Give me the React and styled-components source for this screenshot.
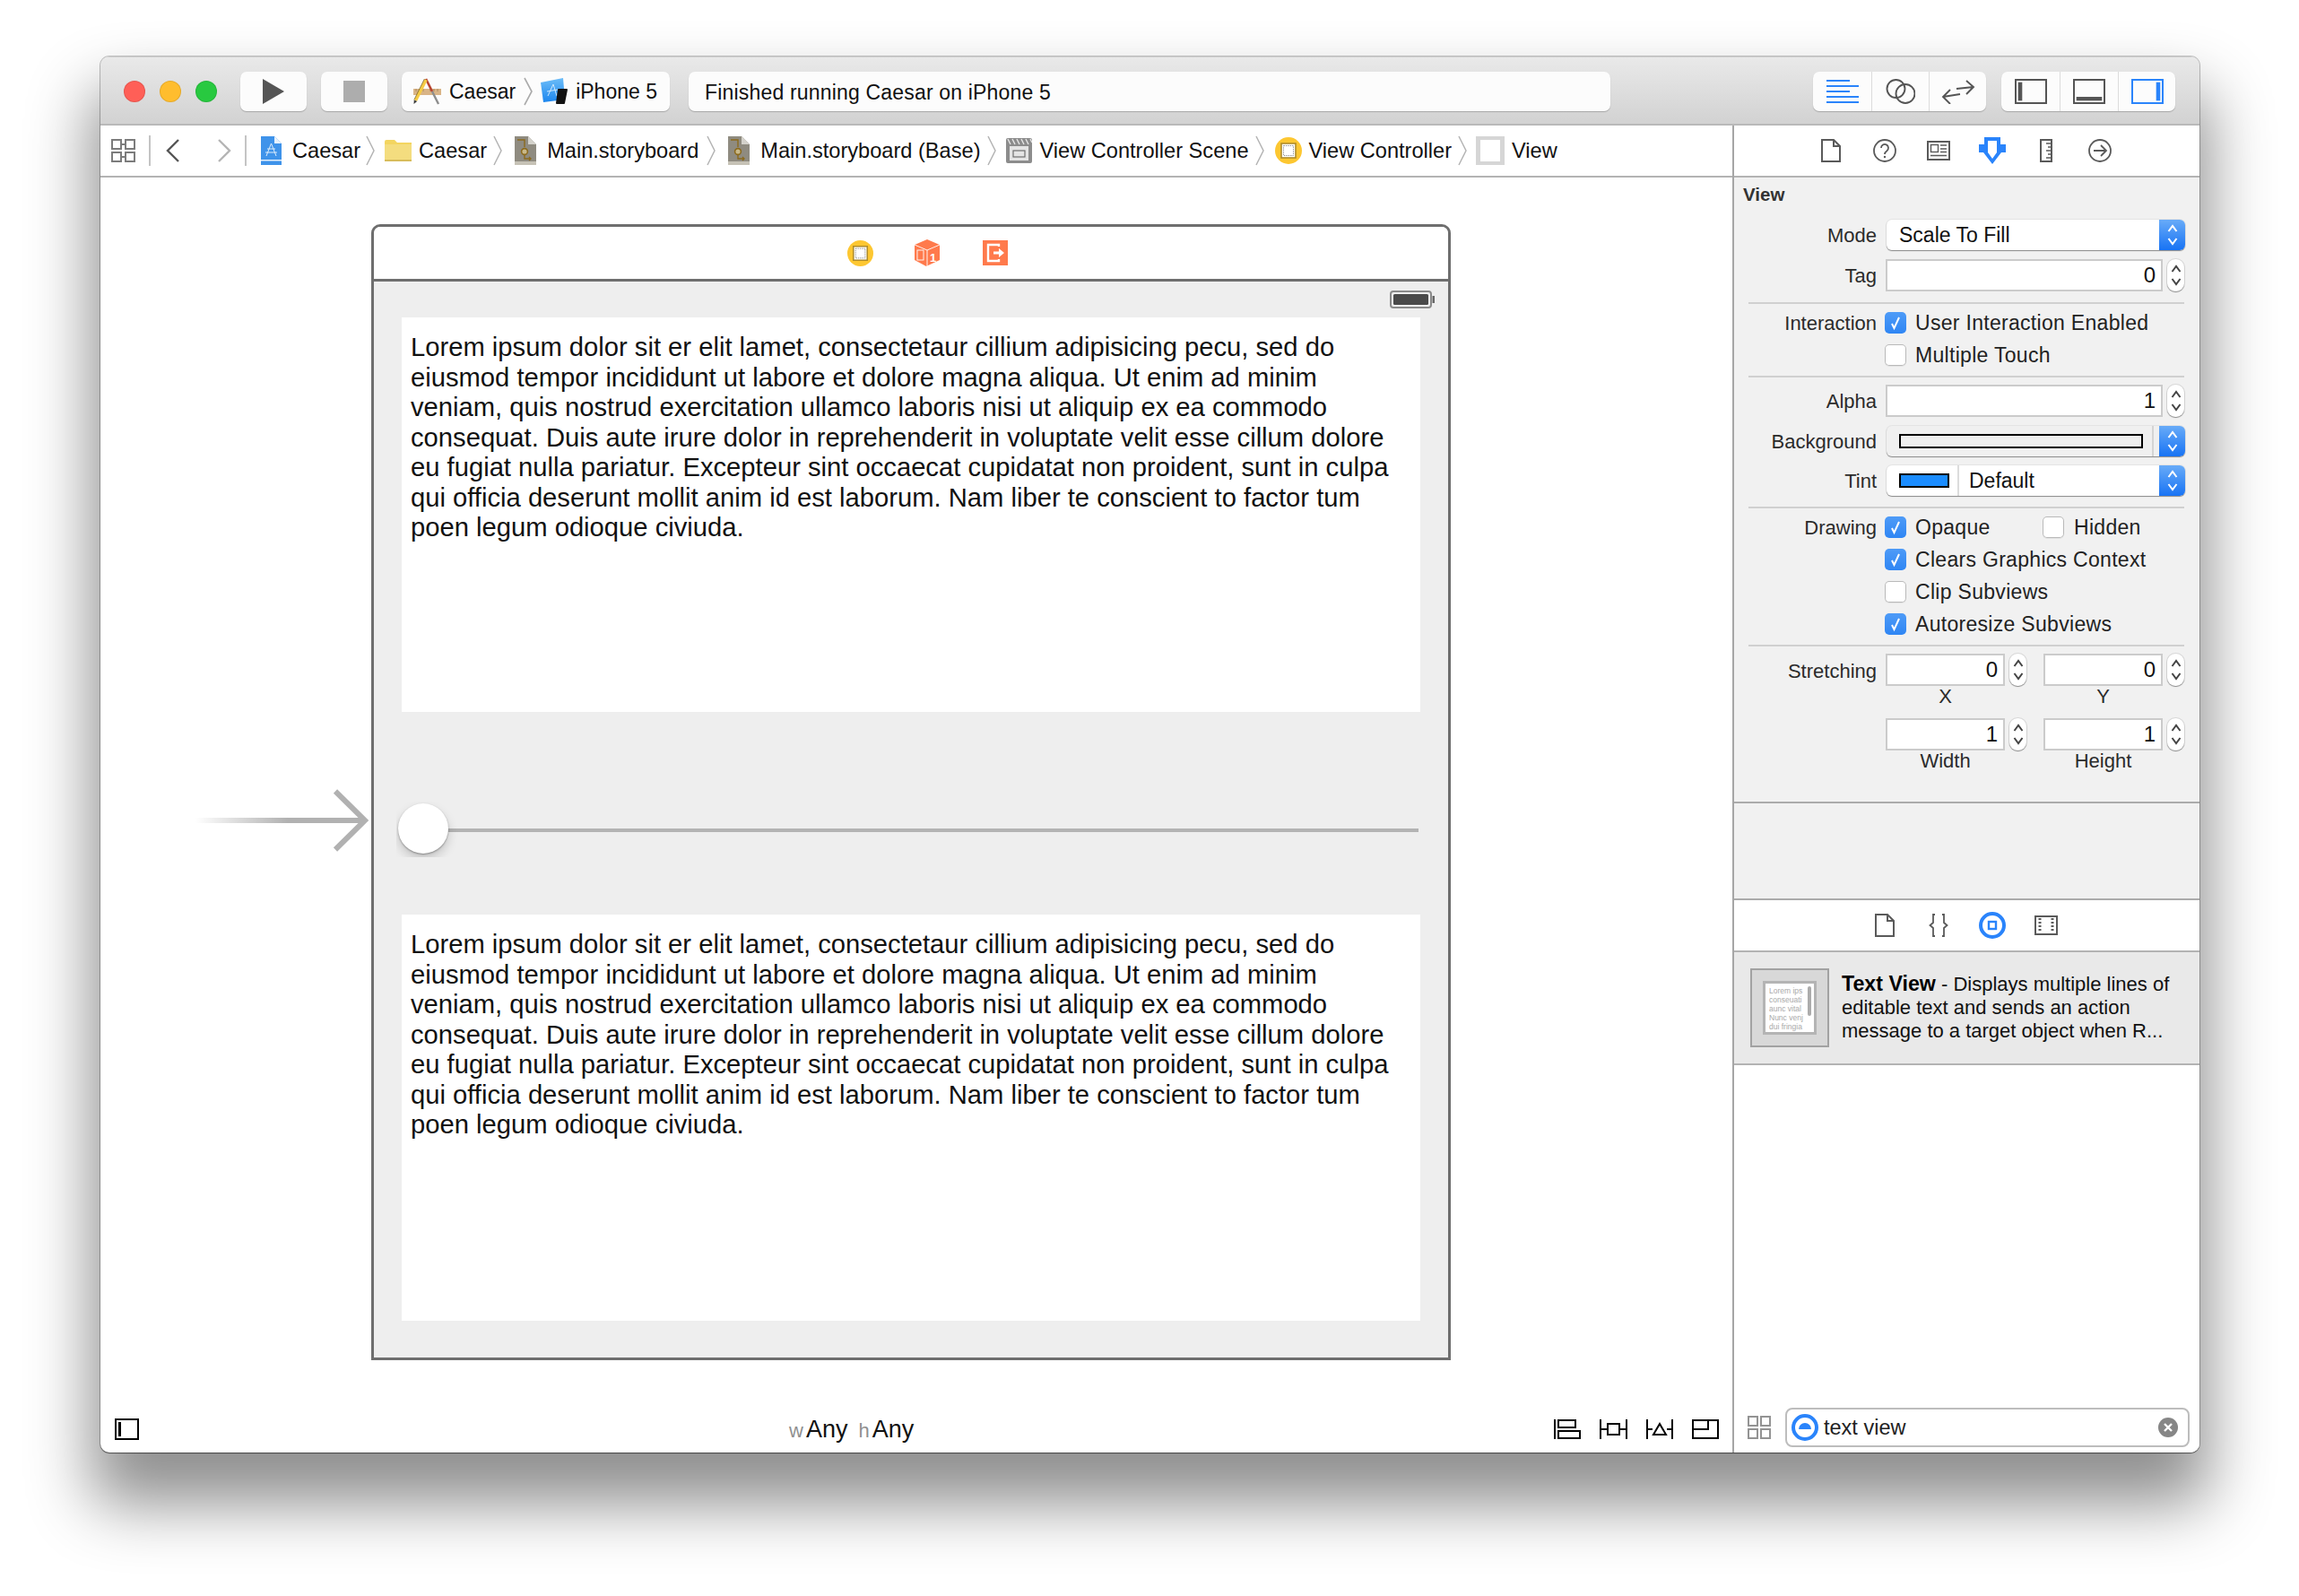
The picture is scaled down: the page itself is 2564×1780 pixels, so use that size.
import React from 'react';
import styled, { createGlobalStyle } from 'styled-components';

const GlobalStyle = createGlobalStyle`
  html, body {
    margin: 0;
    background: #fff;
    font-family: "Liberation Sans", Arial, sans-serif;
    color: #111;
  }
  * { box-sizing: border-box; }
`;

const Page = styled.div`
  width: 2564px;
  height: 1780px;
  padding: 63px 0 0 112px;
  overflow: hidden;
`;

const Window = styled.div`
  width: 2341px;
  height: 1557px;
  display: flex;
  flex-direction: column;
  background: #fff;
  border-radius: 10px;
  overflow: hidden;
  box-shadow: 0 48px 70px 10px rgba(0, 0, 0, 0.44), 0 0 0 1px rgba(0, 0, 0, 0.22), 0 1px 1px rgba(0, 0, 0, 0.4);
`;

const Icon = styled.svg`
  display: block;
  flex-shrink: 0;
`;

/* toolbar */
const Toolbar = styled.div`
  height: 77px;
  flex-shrink: 0;
  display: flex;
  align-items: center;
  padding: 2px 27px 0 26px;
  background: linear-gradient(#e9e9e9, #d2d2d2);
  border-top: 1px solid #cfcfcf;
  border-bottom: 2px solid #b9b9b9;
`;

const Lights = styled.div`
  display: flex;
  gap: 16px;
  margin-right: 26px;
`;

const Light = styled.span`
  width: 24px;
  height: 24px;
  border-radius: 50%;
  background: ${(p) => p.$color};
  box-shadow: inset 0 0 0 1px rgba(0, 0, 0, 0.1);
`;

const ToolButton = styled.div`
  width: ${(p) => p.$w}px;
  height: 44px;
  margin-right: ${(p) => p.$mr || 16}px;
  display: flex;
  align-items: center;
  justify-content: ${(p) => (p.$center ? 'center' : 'flex-start')};
  padding: ${(p) => (p.$center ? '0' : p.$pad || '0 11px')};
  background: #fcfcfc;
  border-radius: 7px;
  box-shadow: 0 1px 1px rgba(0, 0, 0, 0.22);
  font-size: 23px;
  white-space: nowrap;
  flex-shrink: 0;
`;

const StatusText = styled.span`
  letter-spacing: 0.18px;
  padding-top: 2px;
`;

const Segments = styled.div`
  display: flex;
  margin-left: ${(p) => p.$ml || 0}px;
  height: 44px;
  background: #fcfcfc;
  border-radius: 7px;
  box-shadow: 0 1px 1px rgba(0, 0, 0, 0.22);
  overflow: hidden;
`;

const Segment = styled.div`
  width: ${(p) => p.$w || 64}px;
  display: flex;
  align-items: center;
  justify-content: center;
  & + & { border-left: 1px solid #dcdcdc; }
`;

/* main area */
const Main = styled.div`
  flex: 1;
  display: flex;
  min-height: 0;
`;

const Editor = styled.div`
  flex: 1;
  display: flex;
  flex-direction: column;
  min-width: 0;
`;

const Breadcrumbs = styled.div`
  height: 58px;
  flex-shrink: 0;
  display: flex;
  align-items: center;
  padding-left: 12px;
  border-bottom: 2px solid #b3b3b3;
  font-size: 23.6px;
  white-space: nowrap;
`;

const NavDivider = styled.span`
  width: 2px;
  height: 34px;
  background: #c4c4c4;
  margin: 0 ${(p) => p.$mr}px 0 ${(p) => p.$ml}px;
`;

const NavForward = styled.span`
  margin-left: 41px;
`;

const Crumb = styled.div`
  display: flex;
  align-items: center;
  gap: ${(p) => p.$gap || 12}px;
  margin-left: ${(p) => p.$ml || 0}px;
  margin-right: ${(p) => p.$mr || 0}px;
`;

const Canvas = styled.div`
  flex: 1;
  min-height: 0;
  padding: 52px 0 0 302px;
`;

const Device = styled.div`
  position: relative;
  width: 1204px;
  height: 1267px;
  border: 3px solid #6e6e6e;
  border-radius: 10px 10px 0 0;
  display: flex;
  flex-direction: column;
  background: #eee;
`;

const EntryArrow = styled(Icon)`
  position: absolute;
  left: -203px;
  top: 626px;
`;

const DeviceBar = styled.div`
  height: 61px;
  flex-shrink: 0;
  display: flex;
  align-items: center;
  justify-content: center;
  gap: 46px;
  padding-left: 36px;
  background: #fff;
  border-bottom: 3px solid #6e6e6e;
  border-radius: 7px 7px 0 0;
`;

const ExitWrap = styled.span`
  margin-left: 2px;
`;

const StatusStrip = styled.div`
  height: 40px;
  flex-shrink: 0;
  display: flex;
  justify-content: flex-end;
  padding: 10px 15px 0 0;
`;

const TextArea = styled.div`
  height: ${(p) => p.$h}px;
  margin: 0 31px;
  flex-shrink: 0;
  padding: 17px 10px 0;
  background: #fff;
  font-size: 29.2px;
  line-height: 33.5px;
  white-space: nowrap;
`;

const SliderArea = styled.div`
  height: 226px;
  flex-shrink: 0;
  display: flex;
  padding: 102px 33px 0 27px;
`;

const SliderThumb = styled.div`
  width: 56px;
  height: 56px;
  flex-shrink: 0;
  border-radius: 50%;
  background: #fff;
  box-shadow: 0 6px 12px rgba(0, 0, 0, 0.18), 0 1px 2px rgba(0, 0, 0, 0.35);
  clip-path: inset(-2px -28px -4px -2px);
`;

const SliderTrack = styled.div`
  flex: 1;
  height: 4px;
  margin-top: 28px;
  background: #b3b3b3;
`;

const BottomBar = styled.div`
  height: 50px;
  flex-shrink: 0;
  display: flex;
  align-items: center;
  padding: 0 15px 2px 16px;
`;

const SizeClass = styled.div`
  margin-left: 725px;
  display: flex;
  align-items: baseline;
  font-size: 27px;
`;

const SizePrefix = styled.span`
  font-size: 22px;
  color: #8f8f8f;
  margin: 0 3px 0 ${(p) => p.$ml || 0}px;
`;

const LayoutIcons = styled.div`
  margin-left: auto;
  display: flex;
  gap: 21px;
`;

/* inspector */
const Inspector = styled.div`
  width: 521px;
  flex-shrink: 0;
  display: flex;
  flex-direction: column;
  border-left: 2px solid #a6a6a6;
`;

const TabBar = styled.div`
  height: 58px;
  flex-shrink: 0;
  display: flex;
  align-items: center;
  justify-content: center;
  padding-right: 3px;
  background: #fff;
  border-bottom: 2px solid #b3b3b3;
`;

const Tab = styled.div`
  width: 60px;
  display: flex;
  justify-content: center;
`;

const Attributes = styled.div`
  height: 806px;
  flex-shrink: 0;
  background: #f1f1f1;
  border-bottom: 2px solid #ababab;
  font-size: 22px;
  color: #2b2b2b;
`;

const AttributesBody = styled.div`
  height: 698px;
  border-bottom: 2px solid #ababab;
`;

const SectionTitle = styled.div`
  height: 47px;
  padding: 7px 0 0 10px;
  font-size: 20.5px;
  font-weight: bold;
  line-height: 24px;
  color: #333;
`;

const Section = styled.div`
  display: flex;
  flex-direction: column;
  gap: ${(p) => p.$gap || 10}px;
  padding-top: ${(p) => p.$top || 0}px;
  padding-bottom: ${(p) => p.$bottom || 0}px;
`;

const Rule = styled.div`
  width: 486px;
  height: 2px;
  margin-left: 16px;
  background: #d0d0d0;
`;

const Row = styled.div`
  display: flex;
  align-items: ${(p) => (p.$top ? 'flex-start' : 'center')};
  gap: 10px;
  height: ${(p) => (p.$auto ? 'auto' : `${p.$h || 24}px`)};
`;

const Label = styled.div`
  width: 159px;
  flex-shrink: 0;
  padding-top: 2px;
  text-align: right;
  line-height: ${(p) => p.$lh || 24}px;
`;

const Select = styled.div`
  width: 333px;
  height: 34px;
  margin-left: 1px;
  display: flex;
  background: ${(p) => p.$bg || '#fff'};
  border-radius: 6px;
  overflow: hidden;
  box-shadow: 0 1px 1px rgba(0, 0, 0, 0.4), 0 0 0 1px rgba(0, 0, 0, 0.05);
  color: #111;
  font-size: 23px;
`;

const SelectBody = styled.div`
  flex: 1;
  display: flex;
  align-items: center;
  padding-left: ${(p) => p.$pl}px;
`;

const SwatchCell = styled.div`
  width: 81px;
  flex-shrink: 0;
  display: flex;
  align-items: center;
  padding-left: 14px;
  border-right: 2px solid #dcdcdc;
`;

const WellCell = styled.div`
  width: 298px;
  flex-shrink: 0;
  display: flex;
  align-items: center;
  padding-left: 14px;
  border-right: 2px solid #d4d4d4;
  margin-right: 6px;
`;

const Swatch = styled.span`
  width: ${(p) => p.$w}px;
  height: 16px;
  background: ${(p) => p.$color};
  border: 2px solid #000;
`;

const SelectCap = styled.div`
  width: 29px;
  flex-shrink: 0;
  display: flex;
  align-items: center;
  justify-content: center;
  background: linear-gradient(#68abf8, #1873f4);
`;

const NumberField = styled.div`
  flex: 1;
  min-width: 0;
  height: 36px;
  display: flex;
  align-items: center;
  justify-content: flex-end;
  padding-right: 6px;
  background: #fff;
  border: 2px solid #cbcbcb;
  font-size: 24px;
  color: #111;
`;

const StepperPill = styled.div`
  width: 19px;
  height: 36px;
  flex-shrink: 0;
  display: flex;
  align-items: center;
  justify-content: center;
  background: #fff;
  border-radius: 9px;
  box-shadow: 0 1px 1px rgba(0, 0, 0, 0.35), 0 0 0 1px rgba(0, 0, 0, 0.1);
`;

const FieldLine = styled.div`
  display: flex;
  gap: 5px;
  width: ${(p) => p.$w}px;
`;

const CheckLine = styled.div`
  display: flex;
  align-items: center;
  height: 24px;
  margin-left: -1px;
`;

const Box = styled.span`
  width: 24px;
  height: 24px;
  flex-shrink: 0;
  display: flex;
  align-items: center;
  justify-content: center;
  border-radius: 5px;
  background: ${(p) => (p.$on ? 'linear-gradient(#4e9bf7, #2f86f4)' : '#fff')};
  box-shadow: ${(p) => (p.$on ? 'none' : 'inset 0 0 0 1px #b9b9b9, 0 1px 0 rgba(0, 0, 0, 0.06)')};
`;

const CheckText = styled.span`
  margin-left: ${(p) => p.$ml || 10}px;
  width: ${(p) => (p.$w ? `${p.$w}px` : 'auto')};
  font-size: 23px;
  line-height: 24px;
  letter-spacing: 0.3px;
  white-space: nowrap;
  color: #222;
`;

const Coords = styled.div`
  display: flex;
  gap: 19px;
`;

const Coord = styled.div`
  width: 157px;
`;

const Caption = styled.div`
  width: 133px;
  line-height: 24px;
  text-align: center;
`;

const Description = styled.div`
  height: 126px;
  flex-shrink: 0;
  display: flex;
  gap: 14px;
  padding: 18px 0 0 18px;
  background: #e9e9e9;
  border-bottom: 2px solid #b3b3b3;
`;

const Thumb = styled.div`
  width: 88px;
  height: 88px;
  flex-shrink: 0;
  display: flex;
  align-items: center;
  justify-content: center;
  background: #d8d8d8;
  border: 2px solid #a2a2a2;
`;

const ThumbInner = styled.div`
  position: relative;
  width: 60px;
  height: 60px;
  padding: 3px 0 0 4px;
  background: #fff;
  border: 3px solid #b4b4b4;
  font-size: 8.5px;
  line-height: 10px;
  color: #a9a9a9;
  white-space: nowrap;
  overflow: hidden;
`;

const ThumbBar = styled.span`
  position: absolute;
  right: 3px;
  top: 3px;
  width: 4px;
  height: 33px;
  border-radius: 2px;
  background: #acacac;
`;

const DescriptionText = styled.div`
  padding-top: 4px;
  font-size: 22px;
  line-height: 26px;
  white-space: nowrap;
  color: #111;
  b { color: #000; font-size: 23.2px; }
`;

const Library = styled.div`
  flex: 1;
  min-height: 0;
  background: #fff;
`;

const FilterBar = styled.div`
  height: 50px;
  flex-shrink: 0;
  display: flex;
  align-items: center;
  gap: 16px;
  padding: 0 11px 6px 15px;
  background: #fff;
`;

const FilterField = styled.div`
  flex: 1;
  height: 44px;
  display: flex;
  align-items: center;
  gap: 6px;
  padding: 0 11px 0 5px;
  border: 2px solid #bdbdbd;
  border-radius: 8px;
  font-size: 23.5px;
  color: #222;
`;

const FilterText = styled.span`
  flex: 1;
`;

/* ---- drawn icons ---- */
const Play = () => (
  <Icon width="26" height="28" viewBox="0 0 26 28"><path d="M1 0L25 14L1 28Z" fill="#555" /></Icon>
);
const Stop = () => (
  <Icon width="24" height="24" viewBox="0 0 24 24"><rect width="24" height="24" fill="#adadad" /></Icon>
);

const Tools = () => (
  <Icon width="34" height="34" viewBox="0 0 34 34">
    <rect x="2" y="14" width="31" height="7" fill="#d9b486" />
    <path d="M5 14V17M9 14V17M13 14V17M21 14V17M25 14V17M29 14V17" stroke="#a07f55" strokeWidth=".8" />
    <path d="M16 3L23 17" stroke="#b8442f" strokeWidth="2.6" fill="none" />
    <path d="M23 17L30 31" stroke="#8d8d8d" strokeWidth="2.4" fill="none" />
    <path d="M16 4L4.5 27" stroke="#f5cb45" strokeWidth="3.6" fill="none" />
    <path d="M14.4 3L2.8 26.4" stroke="#6a5518" strokeWidth=".7" fill="none" />
    <path d="M2.8 26.4L2.5 31L6.2 28" fill="#3a3a3a" />
  </Icon>
);

const DeviceIcon = () => (
  <Icon width="31" height="30" viewBox="0 0 31 30">
    <defs>
      <linearGradient id="blueprint" x1="0" x2="0" y1="0" y2="1">
        <stop offset="0" stopColor="#6cbdf8" />
        <stop offset="1" stopColor="#1c86ee" />
      </linearGradient>
    </defs>
    <path d="M0 5L25 0L27 24L3 27Z" fill="url(#blueprint)" />
    <path d="M8 20L14 7L18 20M7 15L19 13" stroke="#cfe8fc" strokeWidth="1" fill="none" />
    <path d="M19 13Q19 12 20 12H29Q30 12 30 13L27 28Q27 29 26 29H18Q17 29 17 28Z" fill="#111" />
  </Icon>
);

const SchemeSep = () => (
  <Icon width="10" height="32" viewBox="0 0 10 32"><path d="M1 1L9 16L1 31" stroke="#aaa" strokeWidth="1.6" fill="none" /></Icon>
);

const CrumbSep = () => (
  <Icon width="10" height="34" viewBox="0 0 10 34"><path d="M1 1L9 17L1 33" stroke="#b4b4b4" strokeWidth="1.5" fill="none" /></Icon>
);

const Related = ({ color = '#7c7c7c' }) => (
  <Icon width="27" height="26" viewBox="0 0 27 26">
    <g stroke={color} strokeWidth="2" fill="none">
      <rect x="1" y="1" width="10" height="10" />
      <rect x="16" y="1" width="10" height="10" />
      <rect x="1" y="15" width="10" height="10" />
      <rect x="16" y="15" width="10" height="10" />
      <path d="M11 6H16M11 20H16" />
    </g>
  </Icon>
);

const Grid = () => (
  <Icon width="26" height="26" viewBox="0 0 26 26">
    <g stroke="#939393" strokeWidth="2" fill="none">
      <rect x="1" y="1" width="10" height="10" />
      <rect x="15" y="1" width="10" height="10" />
      <rect x="1" y="15" width="10" height="10" />
      <rect x="15" y="15" width="10" height="10" />
    </g>
  </Icon>
);

const Chevron = ({ back, color }) => (
  <Icon width="16" height="26" viewBox="0 0 16 26">
    <path d={back ? 'M14 1L2 13L14 25' : 'M2 1L14 13L2 25'} stroke={color} strokeWidth="2.4" fill="none" />
  </Icon>
);

const AppFile = () => (
  <Icon width="24" height="32" viewBox="0 0 24 32">
    <path d="M1 0H16L24 8V32H1Z" fill="#3f93ea" />
    <path d="M16 0L24 8H16Z" fill="#e8f2fc" />
    <path d="M7 22L12.5 8L18 22M6 18H19M8 14H17" stroke="#dcecfb" strokeWidth="1" fill="none" />
    <rect x="1" y="26" width="23" height="1.5" fill="#e4f0fb" />
  </Icon>
);

const Folder = () => (
  <Icon width="30" height="24" viewBox="0 0 30 24">
    <path d="M0 2Q0 0 2 0H11L14 3H30V24H0Z" fill="#f3d560" />
    <path d="M0 5H30V24H0Z" fill="#f4dd7f" />
    <path d="M0 22H30V24H0Z" fill="#d8bc5a" />
  </Icon>
);

const Storyboard = () => (
  <Icon width="24" height="32" viewBox="0 0 24 32">
    <path d="M0 0H15L24 9V32H0Z" fill="#8f8b80" />
    <path d="M15 0L24 9H15Z" fill="#d4d2cb" />
    <path d="M0 28H24V32H0Z" fill="#c6c2b6" />
    <path d="M3 4H11V12M11 21V25H18M16 23L18 25L16 27" stroke="#8b6a1e" strokeWidth="1.4" fill="none" />
    <circle cx="11" cy="17" r="3.4" stroke="#8b6a1e" strokeWidth="1.6" fill="#c9b98a" />
  </Icon>
);

const Scene = () => (
  <Icon width="29" height="28" viewBox="0 0 29 28">
    <rect width="29" height="28" rx="2" fill="#8c8c8c" />
    <path d="M2 1L5 7M7 1L10 7M12 1L15 7M17 1L20 7M22 1L25 7M27 1L29 5" stroke="#e6e6e6" strokeWidth="1.4" />
    <rect x="4" y="9" width="21" height="16" fill="#e4e4e4" />
    <rect x="8" y="14" width="13" height="7" fill="none" stroke="#6e6e6e" strokeWidth="1.2" />
  </Icon>
);

const ControllerIcon = ({ size = 30 }) => (
  <Icon width={size} height={size} viewBox="0 0 30 30">
    <circle cx="15" cy="15" r="15" fill="#fdc731" />
    <rect x="7" y="7" width="16" height="16" fill="#fff" stroke="#b08c28" strokeWidth="1.6" />
    <rect x="9.5" y="9.5" width="11" height="11" fill="none" stroke="#777" strokeWidth=".8" strokeDasharray="1.4 1" />
  </Icon>
);

const ViewBox = () => (
  <Icon width="32" height="32" viewBox="0 0 32 32">
    <rect width="32" height="32" fill="#d6d6d6" />
    <rect x="5" y="4" width="22" height="24" fill="#fff" />
  </Icon>
);

const Lines = () => (
  <Icon width="36" height="26" viewBox="0 0 36 26">
    <path d="M0 1H26M0 7H36M0 13H26M0 19H36M0 25H36" stroke="#2a84fb" strokeWidth="2" />
  </Icon>
);

const Assistant = () => (
  <Icon width="33" height="28" viewBox="0 0 33 28">
    <circle cx="11.5" cy="11" r="10" stroke="#555" strokeWidth="1.9" fill="none" />
    <circle cx="22" cy="16.5" r="10.5" stroke="#555" strokeWidth="1.9" fill="none" />
  </Icon>
);

const VersionArrows = () => (
  <Icon width="38" height="28" viewBox="0 0 38 28">
    <path d="M17 11L36 9M28 2L36 9L28 17" stroke="#555" strokeWidth="1.9" fill="none" />
    <path d="M21 17L2 20M10 12L2 20L10 28" stroke="#555" strokeWidth="1.9" fill="none" />
  </Icon>
);

const PanelIcon = ({ side, color = '#555' }) => (
  <Icon width="36" height="28" viewBox="0 0 36 28">
    <rect x="1" y="1" width="34" height="26" stroke={color} strokeWidth="2" fill="none" />
    {side === 'left' && <rect x="3.7" y="3.7" width="4.6" height="20.6" fill={color} />}
    {side === 'bottom' && <rect x="3.7" y="20" width="28.6" height="4.3" fill={color} />}
    {side === 'right' && <rect x="27.7" y="3.7" width="4.6" height="20.6" fill={color} />}
  </Icon>
);

const Doc = () => (
  <Icon width="22" height="26" viewBox="0 0 22 26">
    <path d="M1 1H14L21 8V25H1ZM14 1V8H21" stroke="#5a5a5a" strokeWidth="2" fill="none" />
  </Icon>
);

const Question = () => (
  <Icon width="26" height="26" viewBox="0 0 26 26">
    <circle cx="13" cy="13" r="12" stroke="#5a5a5a" strokeWidth="1.8" fill="none" />
    <path d="M9 10a4 4 0 1 1 6.4 3.2C14 14.2 13 15 13 17" stroke="#5a5a5a" strokeWidth="1.8" fill="none" />
    <circle cx="13" cy="20" r="1.2" fill="#5a5a5a" />
  </Icon>
);

const IdCard = () => (
  <Icon width="26" height="22" viewBox="0 0 26 22">
    <rect x="1" y="1" width="24" height="20" stroke="#5a5a5a" strokeWidth="2" fill="none" />
    <rect x="4.5" y="4.5" width="8" height="8" stroke="#5a5a5a" strokeWidth="1.4" fill="none" />
    <path d="M15 5H22M15 9H22M15 12.5H22M4 16.5H22" stroke="#5a5a5a" strokeWidth="1.6" />
  </Icon>
);

const Shield = () => (
  <Icon width="30" height="30" viewBox="0 0 30 30">
    <path fillRule="evenodd" d="M6 0H24V8H30V17H25L15 30L5 17H0V8H6ZM10 4V17L15 24L20 17V4Z" fill="#2a84fb" />
  </Icon>
);

const Ruler = () => (
  <Icon width="14" height="26" viewBox="0 0 14 26">
    <rect x="1" y="1" width="12" height="24" stroke="#5a5a5a" strokeWidth="2" fill="none" />
    <path d="M7 5H12M9 9H12M7 13H12M9 17H12M7 21H12" stroke="#5a5a5a" strokeWidth="1.6" />
  </Icon>
);

const ArrowCircle = () => (
  <Icon width="26" height="26" viewBox="0 0 26 26">
    <circle cx="13" cy="13" r="12" stroke="#5a5a5a" strokeWidth="1.8" fill="none" />
    <path d="M6 13H19M14 7L20 13L14 19" stroke="#5a5a5a" strokeWidth="1.8" fill="none" />
  </Icon>
);

const Braces = () => (
  <Icon width="22" height="26" viewBox="0 0 22 26">
    <path d="M7 1H5V10L1.5 13L5 16V25H7M15 1H17V10L20.5 13L17 16V25H15" stroke="#5a5a5a" strokeWidth="1.8" fill="none" />
  </Icon>
);

const ObjectsTab = () => (
  <Icon width="30" height="30" viewBox="0 0 30 30">
    <circle cx="15" cy="15" r="13" stroke="#2a84fb" strokeWidth="4" fill="none" />
    <rect x="11" y="11" width="8" height="8" stroke="#2a84fb" strokeWidth="2.4" fill="none" />
  </Icon>
);

const Film = () => (
  <Icon width="26" height="22" viewBox="0 0 26 22">
    <rect x="1" y="1" width="24" height="20" stroke="#5a5a5a" strokeWidth="2" fill="none" />
    <path d="M6 3V19M20 3V19" stroke="#5a5a5a" strokeWidth="3" strokeDasharray="2 2" />
  </Icon>
);

const Updown = ({ color, w = 12, h = 28 }) => (
  <Icon width={w} height={h} viewBox="0 0 12 28">
    <path d="M1.5 10L6 4L10.5 10M1.5 18L6 24L10.5 18" stroke={color} strokeWidth="2" fill="none" />
  </Icon>
);

const Check = () => (
  <Icon width="24" height="24" viewBox="0 0 24 24">
    <path d="M8 13L10.5 18L16 6" stroke="#fff" strokeWidth="2" fill="none" />
  </Icon>
);

const Battery = () => (
  <Icon width="50" height="20" viewBox="0 0 50 20">
    <rect x="1" y="1" width="45" height="18" rx="3" fill="none" stroke="#8a8a8a" strokeWidth="2" />
    <rect x="4" y="4" width="39" height="12" rx="1.5" fill="#4a4a4a" />
    <rect x="47.5" y="6" width="2.5" height="8" fill="#666" />
  </Icon>
);

const Cube = () => (
  <Icon width="28" height="30" viewBox="0 0 28 30">
    <path d="M14 0L28 6V23L13 30L0 23V6Z" fill="#ff7a4c" />
    <path d="M0 6L14 12L28 6M14 12V30" stroke="#fff" strokeWidth=".9" fill="none" />
    <rect x="3" y="12" width="7" height="11" stroke="#fff" strokeWidth=".9" fill="none" />
    <text x="17" y="25" fontSize="13" fontWeight="bold" fill="#fff" fontFamily="Liberation Sans">1</text>
  </Icon>
);

const ExitIcon = () => (
  <Icon width="28" height="28" viewBox="0 0 28 28">
    <rect width="28" height="28" fill="#ff7a4c" />
    <path d="M18 7V5H6V23H18V21" stroke="#fff" strokeWidth="2.4" fill="none" />
    <path d="M12 12.5H18V9L24 14L18 19V15.5H12Z" fill="#fff" />
  </Icon>
);

const Arrow = () => (
  <EntryArrow width="200" height="72" viewBox="0 0 200 72">
    <defs>
      <linearGradient id="shaft" x1="0" x2="1" y1="0" y2="0">
        <stop offset="0" stopColor="#b1b1b1" stopOpacity="0" />
        <stop offset=".55" stopColor="#b1b1b1" />
      </linearGradient>
    </defs>
    <rect x="4" y="33" width="188" height="6" fill="url(#shaft)" />
    <path d="M160 3.5L193 36L160 68.5" stroke="#b1b1b1" strokeWidth="6" fill="none" />
  </EntryArrow>
);

const SidebarToggle = () => (
  <Icon width="27" height="24" viewBox="0 0 27 24">
    <rect x="1" y="1" width="25" height="22" stroke="#000" strokeWidth="2" fill="none" />
    <rect x="4" y="4" width="3" height="16" fill="#000" />
  </Icon>
);

const AlignIcon = () => (
  <Icon width="30" height="22" viewBox="0 0 30 22">
    <path d="M1 0V22" stroke="#000" strokeWidth="2" />
    <path d="M5 1H24V9H5ZM5 13H29V21H5Z" stroke="#000" strokeWidth="2" fill="none" />
  </Icon>
);

const PinIcon = () => (
  <Icon width="31" height="22" viewBox="0 0 31 22">
    <path d="M1 0V22M30 0V22M1 11H9M22 11H30" stroke="#000" strokeWidth="2" />
    <rect x="9" y="5" width="13" height="12" stroke="#000" strokeWidth="2" fill="none" />
  </Icon>
);

const ResolveIcon = () => (
  <Icon width="30" height="22" viewBox="0 0 30 22">
    <path d="M1 0V22M29 0V22M1 11H7M23 11H29" stroke="#000" strokeWidth="2" />
    <path d="M15 5L22 17H8Z" stroke="#000" strokeWidth="2" fill="none" />
  </Icon>
);

const ResizeIcon = () => (
  <Icon width="30" height="22" viewBox="0 0 30 22">
    <rect x="1" y="1" width="28" height="20" stroke="#000" strokeWidth="2" fill="none" />
    <path d="M18 1V11H1" stroke="#000" strokeWidth="2" fill="none" />
  </Icon>
);

const ScopeIcon = () => (
  <Icon width="30" height="30" viewBox="0 0 30 30">
    <circle cx="15" cy="15" r="13" stroke="#2a84fb" strokeWidth="4" fill="#fff" />
    <path d="M8 17A7 7 0 0 1 22 17Z" fill="#2a84fb" />
  </Icon>
);

const ClearIcon = () => (
  <Icon width="22" height="22" viewBox="0 0 22 22">
    <circle cx="11" cy="11" r="11" fill="#868686" />
    <path d="M7 7L15 15M15 7L7 15" stroke="#fff" strokeWidth="2.4" />
  </Icon>
);

/* ---- page parts ---- */
const LOREM = [
  'Lorem ipsum dolor sit er elit lamet, consectetaur cillium adipisicing pecu, sed do',
  'eiusmod tempor incididunt ut labore et dolore magna aliqua. Ut enim ad minim',
  'veniam, quis nostrud exercitation ullamco laboris nisi ut aliquip ex ea commodo',
  'consequat. Duis aute irure dolor in reprehenderit in voluptate velit esse cillum dolore',
  'eu fugiat nulla pariatur. Excepteur sint occaecat cupidatat non proident, sunt in culpa',
  'qui officia deserunt mollit anim id est laborum. Nam liber te conscient to factor tum',
  'poen legum odioque civiuda.',
];

const LoremText = ({ h }) => (
  <TextArea $h={h}>
    {LOREM.map((line) => (
      <div key={line}>{line}</div>
    ))}
  </TextArea>
);

const Stepper = () => (
  <StepperPill>
    <Updown color="#444" />
  </StepperPill>
);

const CapArrows = () => (
  <SelectCap>
    <Updown color="#fff" />
  </SelectCap>
);

const CheckItem = ({ on, children, w, ml }) => (
  <CheckLine>
    <Box $on={on}>{on && <Check />}</Box>
    <CheckText $w={w} $ml={ml}>{children}</CheckText>
  </CheckLine>
);

const CoordField = ({ value, caption }) => (
  <Coord>
    <FieldLine>
      <NumberField>{value}</NumberField>
      <Stepper />
    </FieldLine>
    <Caption>{caption}</Caption>
  </Coord>
);

function App() {
  return (
    <>
      <GlobalStyle />
      <Page>
        <Window>
          <Toolbar>
            <Lights>
              <Light $color="#ff5f57" />
              <Light $color="#ffbd2e" />
              <Light $color="#28c940" />
            </Lights>
            <ToolButton $w={74} $center><Play /></ToolButton>
            <ToolButton $w={74} $center><Stop /></ToolButton>
            <ToolButton $w={299} $mr={21} $pad="0 0 0 11px">
              <Crumb $gap={8} $mr={9}><Tools /><span>Caesar</span></Crumb>
              <SchemeSep />
              <Crumb $gap={8} $ml={9}><DeviceIcon /><span>iPhone 5</span></Crumb>
            </ToolButton>
            <ToolButton $w={1028} $mr={1} $pad="0 0 0 18px">
              <StatusText>Finished running Caesar on iPhone 5</StatusText>
            </ToolButton>
            <Segments $ml={225}>
              <Segment $w={65}><Lines /></Segment>
              <Segment><Assistant /></Segment>
              <Segment><VersionArrows /></Segment>
            </Segments>
            <Segments $ml={17}>
              <Segment $w={65}><PanelIcon side="left" /></Segment>
              <Segment $w={65}><PanelIcon side="bottom" /></Segment>
              <Segment><PanelIcon side="right" color="#2a84fb" /></Segment>
            </Segments>
          </Toolbar>

          <Main>
            <Editor>
              <Breadcrumbs>
                <Related />
                <NavDivider $ml={15} $mr={17} />
                <Chevron back color="#555" />
                <NavForward><Chevron color="#b5b5b5" /></NavForward>
                <NavDivider $ml={15} $mr={15} />
                <Crumb $mr={6}><AppFile /><span>Caesar</span></Crumb>
                <CrumbSep />
                <Crumb $ml={11} $mr={7} $gap={8}><Folder /><span>Caesar</span></Crumb>
                <CrumbSep />
                <Crumb $ml={14} $mr={9}><Storyboard /><span>Main.storyboard</span></Crumb>
                <CrumbSep />
                <Crumb $ml={14} $mr={7}><Storyboard /><span>Main.storyboard (Base)</span></Crumb>
                <CrumbSep />
                <Crumb $ml={11} $mr={7} $gap={9}><Scene /><span>View Controller Scene</span></Crumb>
                <CrumbSep />
                <Crumb $ml={12} $mr={7} $gap={8}><ControllerIcon /><span>View Controller</span></Crumb>
                <CrumbSep />
                <Crumb $ml={10} $gap={8}><ViewBox /><span>View</span></Crumb>
              </Breadcrumbs>

              <Canvas>
                <Device>
                  <Arrow />
                  <DeviceBar>
                    <ControllerIcon size={29} />
                    <Cube />
                    <ExitWrap><ExitIcon /></ExitWrap>
                  </DeviceBar>
                  <StatusStrip><Battery /></StatusStrip>
                  <LoremText h={440} />
                  <SliderArea>
                    <SliderThumb />
                    <SliderTrack />
                  </SliderArea>
                  <LoremText h={453} />
                </Device>
              </Canvas>

              <BottomBar>
                <SidebarToggle />
                <SizeClass>
                  <SizePrefix>w</SizePrefix>Any
                  <SizePrefix $ml={12}>h</SizePrefix>Any
                </SizeClass>
                <LayoutIcons>
                  <AlignIcon />
                  <PinIcon />
                  <ResolveIcon />
                  <ResizeIcon />
                </LayoutIcons>
              </BottomBar>
            </Editor>

            <Inspector>
              <TabBar>
                <Tab><Doc /></Tab>
                <Tab><Question /></Tab>
                <Tab><IdCard /></Tab>
                <Tab><Shield /></Tab>
                <Tab><Ruler /></Tab>
                <Tab><ArrowCircle /></Tab>
              </TabBar>

              <Attributes>
                <AttributesBody>
                  <SectionTitle>View</SectionTitle>
                  <Section $bottom={12}>
                    <Row $h={34}>
                      <Label>Mode</Label>
                      <Select>
                        <SelectBody $pl={14}>Scale To Fill</SelectBody>
                        <CapArrows />
                      </Select>
                    </Row>
                    <Row $h={36}>
                      <Label>Tag</Label>
                      <FieldLine $w={333}>
                        <NumberField>0</NumberField>
                        <Stepper />
                      </FieldLine>
                    </Row>
                  </Section>
                  <Rule />
                  <Section $gap={12} $top={9} $bottom={11}>
                    <Row>
                      <Label>Interaction</Label>
                      <CheckItem on>User Interaction Enabled</CheckItem>
                    </Row>
                    <Row>
                      <Label />
                      <CheckItem>Multiple Touch</CheckItem>
                    </Row>
                  </Section>
                  <Rule />
                  <Section $top={8} $bottom={12}>
                    <Row $h={36}>
                      <Label>Alpha</Label>
                      <FieldLine $w={333}>
                        <NumberField>1</NumberField>
                        <Stepper />
                      </FieldLine>
                    </Row>
                    <Row $h={34}>
                      <Label>Background</Label>
                      <Select $bg="#f0f0f0">
                        <WellCell><Swatch $w={272} $color="#efefef" /></WellCell>
                        <CapArrows />
                      </Select>
                    </Row>
                    <Row $h={34}>
                      <Label>Tint</Label>
                      <Select>
                        <SwatchCell><Swatch $w={56} $color="#1a8cff" /></SwatchCell>
                        <SelectBody $pl={11}>Default</SelectBody>
                        <CapArrows />
                      </Select>
                    </Row>
                  </Section>
                  <Rule />
                  <Section $gap={12} $top={9} $bottom={11}>
                    <Row>
                      <Label>Drawing</Label>
                      <CheckItem on w={133}>Opaque</CheckItem>
                      <CheckItem ml={11}>Hidden</CheckItem>
                    </Row>
                    <Row>
                      <Label />
                      <CheckItem on>Clears Graphics Context</CheckItem>
                    </Row>
                    <Row>
                      <Label />
                      <CheckItem>Clip Subviews</CheckItem>
                    </Row>
                    <Row>
                      <Label />
                      <CheckItem on>Autoresize Subviews</CheckItem>
                    </Row>
                  </Section>
                  <Rule />
                  <Section $gap={12} $top={8}>
                    <Row $top $auto>
                      <Label $lh={36}>Stretching</Label>
                      <Coords>
                        <CoordField value="0" caption="X" />
                        <CoordField value="0" caption="Y" />
                      </Coords>
                    </Row>
                    <Row $top $auto>
                      <Label />
                      <Coords>
                        <CoordField value="1" caption="Width" />
                        <CoordField value="1" caption="Height" />
                      </Coords>
                    </Row>
                  </Section>
                </AttributesBody>
              </Attributes>

              <TabBar>
                <Tab><Doc /></Tab>
                <Tab><Braces /></Tab>
                <Tab><ObjectsTab /></Tab>
                <Tab><Film /></Tab>
              </TabBar>

              <Description>
                <Thumb>
                  <ThumbInner>
                    <div>Lorem ips</div>
                    <div>conseuati</div>
                    <div>aunc vital</div>
                    <div>Nunc venj</div>
                    <div>dui fringia</div>
                    <ThumbBar />
                  </ThumbInner>
                </Thumb>
                <DescriptionText>
                  <b>Text View</b> - Displays multiple lines of<br />
                  editable text and sends an action<br />
                  message to a target object when R...
                </DescriptionText>
              </Description>

              <Library />

              <FilterBar>
                <Grid />
                <FilterField>
                  <ScopeIcon />
                  <FilterText>text view</FilterText>
                  <ClearIcon />
                </FilterField>
              </FilterBar>
            </Inspector>
          </Main>
        </Window>
      </Page>
    </>
  );
}

export default App;
